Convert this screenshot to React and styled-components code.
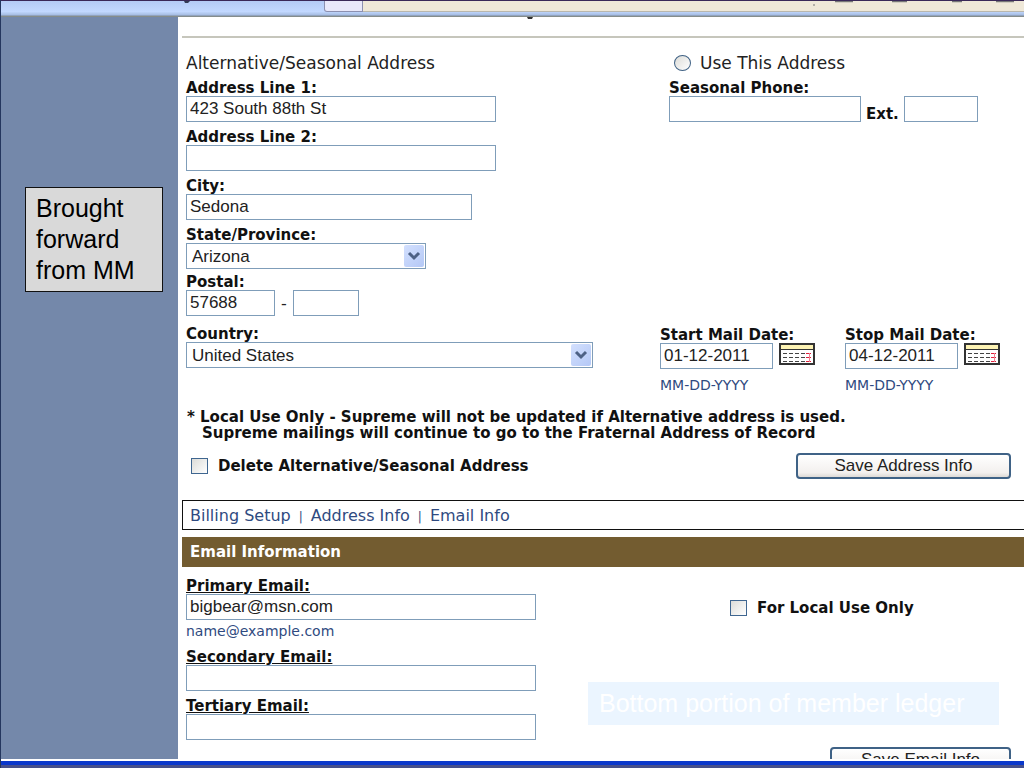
import styled, { createGlobalStyle } from "styled-components";

const TEXT = "#222";
const LINK_BLUE = "#2f4a80";
const FIELD_BORDER = "#7f9db9";
const BAND_BROWN = "#735c30";
const SIDE_BLUE = "#7488aa";
const VERDANA = `Verdana, "DejaVu Sans", sans-serif`;
const ARIAL = `"Liberation Sans", Arial, sans-serif`;

const states = ["Arizona", "California", "Nevada", "Utah"];
const countries = ["United States", "Canada", "Mexico"];
const links = ["Billing Setup", "Address Info", "Email Info"];

const CalendarIcon = () => (
  <svg width="36" height="22" viewBox="0 0 36 22" aria-hidden="true">
    <rect x="1" y="1" width="34" height="20" fill="#fff" stroke="#333" strokeWidth="2" />
    <rect x="2" y="2" width="32" height="4" fill="#fdf3b4" />
    <path d="M2 6.5h32" stroke="#333" />
    <path
      d="M4 10.5h4M10 10.5h4M16 10.500h4M22 10.5h4M4 14.5h4M10 14.5h4M16 14.5h4M22 14.5h4M4 18.5h4M10 18.5h4M16 18.5h4M22 18.5h4"
      stroke="#444"
    />
    <path d="M27 10.5h5M27 14.5h5M27 18.5h5" stroke="#e0203c" />
    <path d="M30.500 10v9" stroke="#f08090" />
  </svg>
);

const SelectArrow = () => (
  <ArrowBox>
    <svg width="20" height="22" viewBox="0 0 20 22" aria-hidden="true">
      <path d="M5 8l5 5 5-5" fill="none" stroke="#4d6185" strokeWidth="3" />
    </svg>
  </ArrowBox>
);

const TextField = ({ id, label, width, value, type = "text", underline, hint }) => (
  <Field>
    <Label htmlFor={id} $underline={underline}>
      {label}
    </Label>
    <Input id={id} type={type} $width={width} defaultValue={value} />
    {hint && <Hint $tight>{hint}</Hint>}
  </Field>
);

const SelectField = ({ id, label, width, options }) => (
  <Field>
    <Label htmlFor={id}>{label}</Label>
    <SelectWrap $width={width}>
      <Select id={id}>
        {options.map((option) => (
          <option key={option}>{option}</option>
        ))}
      </Select>
      <SelectArrow />
    </SelectWrap>
  </Field>
);

const DateField = ({ id, label, value }) => (
  <Field>
    <Label htmlFor={id}>{label}</Label>
    <DateRow>
      <Input id={id} $width={113} defaultValue={value} />
      <IconButton type="button" aria-label={`Pick ${label}`}>
        <CalendarIcon />
      </IconButton>
    </DateRow>
    <Hint>MM-DD-YYYY</Hint>
  </Field>
);

const App = () => {
  return (
    <Frame>
      <GlobalStyle />
      <TopBar>
        <TopTitle>
          <svg width="6" height="2" viewBox="0 0 6 2" aria-hidden="true">
            <path d="M0 0h6L4 2H1z" fill="#333a55" />
          </svg>
        </TopTitle>
        <TopTab />
        <TopTools>
          <svg width="212" height="6" viewBox="0 0 212 6" aria-hidden="true">
            <path d="M23 .5h18M80 .5h15M140 .5h10M184 .5h18" stroke="#777" strokeWidth="1.5" />
            <path d="M1 4h2" stroke="#777" />
          </svg>
        </TopTools>
      </TopBar>
      <Body>
        <Sidebar>
          <Note>Brought forward from MM</Note>
        </Sidebar>
        <Main>
          <HeadingTail width="6" height="2" viewBox="0 0 6 2" aria-hidden="true">
            <path d="M0 0h6L5 2H1z" fill="#333" />
          </HeadingTail>
          <Rule />
          <AddressGrid>
            <AddressLeft>
              <SectionTitle>Alternative/Seasonal Address</SectionTitle>
              <TextField id="line1" label="Address Line 1:" width={310} value="423 South 88th St" />
              <TextField id="line2" label="Address Line 2:" width={310} />
              <TextField id="city" label="City:" width={286} value="Sedona" />
              <StateGroup>
                <SelectField id="state" label="State/Province:" width={240} options={states} />
                <Field>
                  <Label htmlFor="postal">Postal:</Label>
                  <PostalRow>
                    <Input id="postal" $width={89} defaultValue="57688" />
                    <span>-</span>
                    <Input aria-label="Postal extension" $width={66} />
                  </PostalRow>
                </Field>
              </StateGroup>
              <SelectField id="country" label="Country:" width={407} options={countries} />
            </AddressLeft>
            <AddressRight>
              <PhoneBlock>
                <RadioLabel>
                  <Radio type="radio" name="use" />
                  Use This Address
                </RadioLabel>
                <Label htmlFor="phone">Seasonal Phone:</Label>
                <PhoneRow>
                  <Input id="phone" type="tel" $width={192} />
                  <Label htmlFor="ext">Ext.</Label>
                  <Input id="ext" $width={74} />
                </PhoneRow>
              </PhoneBlock>
              <DateFields>
                <DateField id="start" label="Start Mail Date:" value="01-12-2011" />
                <DateField id="stop" label="Stop Mail Date:" value="04-12-2011" />
              </DateFields>
            </AddressRight>
          </AddressGrid>
          <Notice>
            * Local Use Only - Supreme will not be updated if Alternative address is used.
            <NoticeLine>Supreme mailings will continue to go to the Fraternal Address of Record</NoticeLine>
          </Notice>
          <ActionRow>
            <CheckLabel>
              <Checkbox type="checkbox" />
              Delete Alternative/Seasonal Address
            </CheckLabel>
            <Button type="button" $width={215}>
              Save Address Info
            </Button>
          </ActionRow>
          <LinkBar>
            {links.map((link) => (
              <a href="#" key={link}>
                {link}
              </a>
            ))}
          </LinkBar>
          <Band>Email Information</Band>
          <EmailGrid>
            <EmailLeft>
              <TextField
                id="primary"
                type="email"
                label="Primary Email:"
                width={350}
                value="bigbear@msn.com"
                hint="name@example.com"
                underline
              />
              <TextField id="secondary" type="email" label="Secondary Email:" width={350} underline />
              <TextField id="tertiary" type="email" label="Tertiary Email:" width={350} underline />
            </EmailLeft>
            <EmailRight>
              <CheckLabel>
                <Checkbox type="checkbox" />
                For Local Use Only
              </CheckLabel>
            </EmailRight>
          </EmailGrid>
          <EmailActions>
            <Button type="button" $width={181}>
              Save Email Info
            </Button>
          </EmailActions>
        </Main>
      </Body>
      <BottomBar />
      <Caption>Bottom portion of member ledger</Caption>
    </Frame>
  );
};

const GlobalStyle = createGlobalStyle`
  * {
    box-sizing: border-box;
  }

  body {
    margin: 0;
    background: #fff;
    color: ${TEXT};
    font-family: ${VERDANA};
    font-size: 16px;
  }
`;

const Frame = styled.div`
  position: relative;
  display: flex;
  flex-direction: column;
  height: 100vh;
  overflow: hidden;
  border-left: 1px solid #24365e;
`;

const TopBar = styled.header`
  display: flex;
  flex: none;
  height: 17px;
  border-top: 1px solid #3a2858;
  border-bottom: 1px solid #858d8c;
  background: linear-gradient(#b4cbf6, #c2d8ff 70%, #a9c0e6 90%, #8795a8);
`;

const TopTitle = styled.div`
  display: flex;
  width: 323px;
  padding-left: 183px;
`;

const TopTab = styled.div`
  width: 39px;
  height: 11px;
  border: 1px solid #8c90b0;
  border-top: 0;
  border-radius: 0 0 0 3px;
  background: #e9e8fa;
`;

const TopTools = styled.div`
  display: flex;
  flex: 1;
  justify-content: flex-end;
  height: 11px;
  border-bottom: 1px solid #b9b7ad;
  background: #efe8d8;
`;

const Body = styled.div`
  display: flex;
  flex: 1;
  min-height: 0;
  margin-bottom: 2px;
  overflow: hidden;
`;

const Sidebar = styled.aside`
  flex: none;
  width: 177px;
  padding: 170px 15px 0 24px;
  background: ${SIDE_BLUE};
`;

const Note = styled.p`
  margin: 0;
  padding: 5px 10px;
  border: 1px solid #111;
  background: #d9d9d9;
  color: #000;
  font-family: ${ARIAL};
  font-size: 25px;
  line-height: 31px;
`;

const Main = styled.main`
  flex: 1;
  min-width: 0;
  padding-left: 4px;
`;

const HeadingTail = styled.svg`
  display: block;
  margin-left: 345px;
`;

const Rule = styled.hr`
  height: 2px;
  margin: 17px 0 10px;
  border: 0;
  background: #c6c6bc;
`;

const AddressGrid = styled.section`
  display: grid;
  grid-template-columns: 1fr 364px;
  padding-left: 4px;
`;

const AddressLeft = styled.div`
  display: flex;
  flex-direction: column;
  gap: 5px;
  padding-bottom: 26px;
`;

const AddressRight = styled.div`
  display: flex;
  flex-direction: column;
  justify-content: space-between;
`;

const SectionTitle = styled.h2`
  margin: 0 0 -5px;
  font-size: 17px;
  font-weight: normal;
  line-height: 30px;
`;

const StateGroup = styled.div`
  display: flex;
  flex-direction: column;
  gap: 3px;
  padding-bottom: 3px;
`;

const Field = styled.div`
  display: flex;
  flex-direction: column;
  align-items: flex-start;
`;

const Label = styled.label`
  padding-top: 2px;
  color: #111;
  font-size: 15px;
  font-weight: bold;
  line-height: 16px;
  text-decoration: ${({ $underline }) => ($underline ? "underline" : "none")};
`;

const Input = styled.input`
  width: ${({ $width }) => $width}px;
  height: 26px;
  padding: 0 3px;
  border: 1px solid ${FIELD_BORDER};
  background: #fff;
  color: ${TEXT};
  font-family: ${ARIAL};
  font-size: 17px;
`;

const SelectWrap = styled.div`
  display: flex;
  width: ${({ $width }) => $width}px;
  height: 26px;
  border: 1px solid ${FIELD_BORDER};
`;

const Select = styled.select`
  flex: 1;
  min-width: 0;
  padding: 0 5px;
  border: 0;
  appearance: none;
  background: #fff;
  color: ${TEXT};
  font-family: ${ARIAL};
  font-size: 17px;
`;

const ArrowBox = styled.span`
  display: flex;
  width: 20px;
  height: 22px;
  margin: 1px;
  border-radius: 2px;
  background: linear-gradient(135deg, #d3e0fe, #b4c8f6);
`;

const PostalRow = styled.div`
  display: flex;
  align-items: center;
  gap: 6px;
`;

const PhoneBlock = styled.div`
  display: flex;
  flex-direction: column;
  padding-left: 9px;
`;

const RadioLabel = styled.label`
  display: flex;
  align-items: center;
  gap: 9px;
  padding-left: 5px;
  font-size: 17px;
  line-height: 30px;
`;

const Radio = styled.input`
  width: 17px;
  height: 16px;
  margin: 0;
  border: 1px solid #3f6184;
  border-radius: 50%;
  appearance: none;
  background: linear-gradient(135deg, #dcdcd8, #fff);
`;

const PhoneRow = styled.div`
  display: flex;
  align-items: flex-end;
  gap: 5px;
`;

const DateFields = styled.div`
  display: flex;
  gap: 30px;
`;

const DateRow = styled.div`
  display: flex;
  gap: 6px;
`;

const IconButton = styled.button`
  display: flex;
  height: 22px;
  padding: 0;
  border: 0;
  background: none;
`;

const Hint = styled.small`
  margin: ${({ $tight }) => ($tight ? "2px 0" : "7px 0 0")};
  color: ${LINK_BLUE};
  font-size: 14px;
  line-height: 18px;
`;

const Notice = styled.p`
  margin: 15px 0 12px;
  padding-left: 5px;
  color: #111;
  font-size: 15px;
  font-weight: bold;
  line-height: 16px;
  white-space: nowrap;
`;

const NoticeLine = styled.span`
  display: block;
  padding-left: 15px;
`;

const ActionRow = styled.div`
  display: flex;
  align-items: center;
  justify-content: space-between;
  padding: 0 13px 0 9px;
`;

const CheckLabel = styled.label`
  display: flex;
  align-items: center;
  gap: 10px;
  color: #111;
  font-size: 15px;
  font-weight: bold;
  line-height: 26px;
`;

const Checkbox = styled.input`
  width: 17px;
  height: 16px;
  margin: 0;
  border: 1px solid #3f6690;
  appearance: none;
  background: linear-gradient(135deg, #dcdcd8, #fff);
`;

const Button = styled.button`
  width: ${({ $width }) => $width}px;
  height: 26px;
  padding: 0;
  border: 2px solid #3f6286;
  border-radius: 4px;
  background: linear-gradient(#fff, #f3f0ee 80%, #dedad6);
  color: ${TEXT};
  font-family: ${ARIAL};
  font-size: 17px;
`;

const LinkBar = styled.nav`
  display: flex;
  height: 30px;
  margin: 21px 0 7px;
  padding-left: 7px;
  border: 1px solid #111;
  border-right: 0;
  line-height: 30px;

  a {
    color: ${LINK_BLUE};
    text-decoration: none;
  }

  a + a::before {
    content: "|";
    padding: 0 8px;
    font-size: 12px;
  }
`;

const Band = styled.h2`
  margin: 0;
  padding-left: 8px;
  background: ${BAND_BROWN};
  color: #fff;
  font-size: 15px;
  line-height: 30px;
`;

const EmailGrid = styled.section`
  display: grid;
  grid-template-columns: 1fr 294px;
  padding: 9px 0 0 4px;
`;

const EmailLeft = styled.div`
  display: flex;
  flex-direction: column;
  gap: 5px;
`;

const EmailRight = styled.div`
  padding-top: 19px;
`;

const EmailActions = styled.div`
  display: flex;
  justify-content: flex-end;
  padding: 7px 13px 0 0;
`;

const BottomBar = styled.footer`
  flex: none;
  height: 7px;
  border-top: 4px solid #0a38cc;
  background: #46508c;
`;

const Caption = styled.p`
  position: absolute;
  right: 25px;
  bottom: 43px;
  width: 411px;
  margin: 0;
  padding: 6px 11px;
  background: #ebf5ff;
  color: #fff;
  font-family: ${ARIAL};
  font-size: 25px;
  line-height: 31px;
`;

export default App;
